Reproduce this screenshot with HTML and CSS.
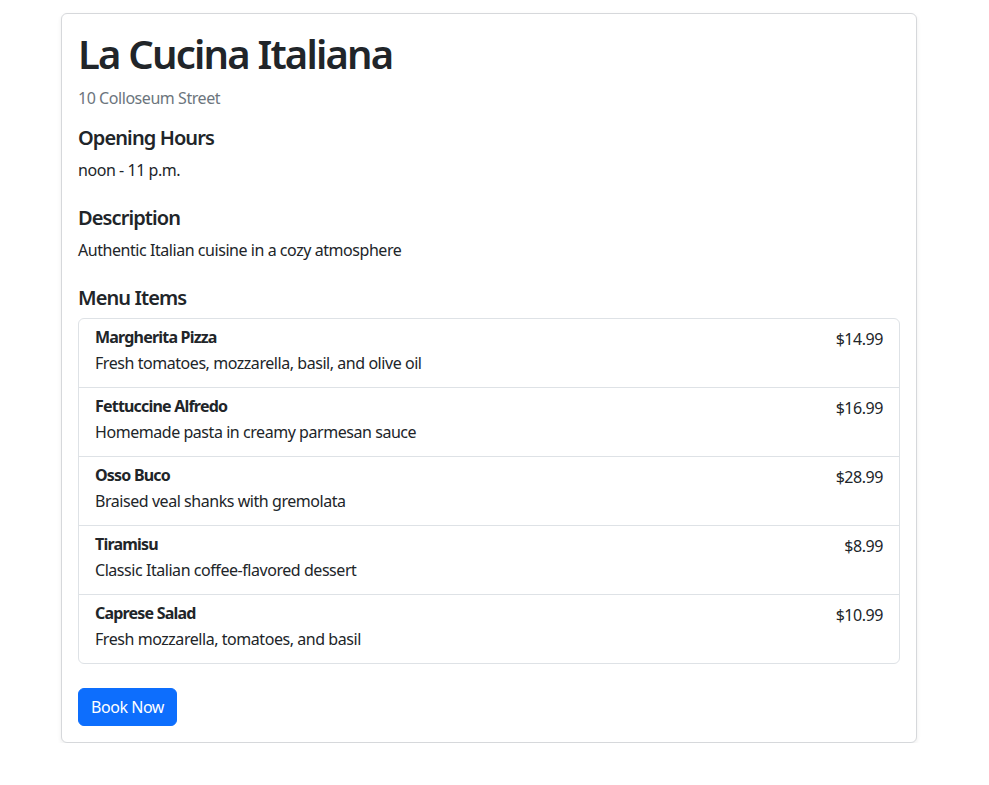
FILE: index.html
```html
<!DOCTYPE html>
<html lang="en">
<head>
<meta charset="utf-8">
<title>La Cucina Italiana</title>
<link rel="stylesheet" href="styles.css">
</head>
<body>
<main class="page">
  <section class="card">
    <h1 class="title">La Cucina Italiana</h1>
    <p class="address">10 Colloseum Street</p>

    <div class="section">
      <h5 class="heading">Opening Hours</h5>
      <p class="text">noon - 11 p.m.</p>
    </div>

    <div class="section">
      <h5 class="heading">Description</h5>
      <p class="text">Authentic Italian cuisine in a cozy atmosphere</p>
    </div>

    <h5 class="heading">Menu Items</h5>
    <ul class="menu">
      <li class="item">
        <div class="item-info">
          <h6 class="item-name">Margherita Pizza</h6>
          <p class="item-desc">Fresh tomatoes, mozzarella, basil, and olive oil</p>
        </div>
        <span class="price">$14.99</span>
      </li>
      <li class="item">
        <div class="item-info">
          <h6 class="item-name">Fettuccine Alfredo</h6>
          <p class="item-desc">Homemade pasta in creamy parmesan sauce</p>
        </div>
        <span class="price">$16.99</span>
      </li>
      <li class="item">
        <div class="item-info">
          <h6 class="item-name">Osso Buco</h6>
          <p class="item-desc">Braised veal shanks with gremolata</p>
        </div>
        <span class="price">$28.99</span>
      </li>
      <li class="item">
        <div class="item-info">
          <h6 class="item-name">Tiramisu</h6>
          <p class="item-desc">Classic Italian coffee-flavored dessert</p>
        </div>
        <span class="price">$8.99</span>
      </li>
      <li class="item">
        <div class="item-info">
          <h6 class="item-name">Caprese Salad</h6>
          <p class="item-desc">Fresh mozzarella, tomatoes, and basil</p>
        </div>
        <span class="price">$10.99</span>
      </li>
    </ul>

    <button class="btn" type="button">Book Now</button>
  </section>
</main>
</body>
</html>
```

FILE: styles.css
```css
* { box-sizing: border-box; }

html, body {
  margin: 0;
  padding: 0;
  background: #fff;
}

body {
  font-family: "Noto Sans", "Open Sans", sans-serif;
  font-size: 16px;
  line-height: 24px;
  letter-spacing: -0.028em;
  color: #212529;
}

.page {
  padding-top: 13px;
  padding-left: 61px;
}

.card {
  width: 856px;
  border: 1px solid #d6d8db;
  border-radius: 6px;
  box-shadow: 0 2px 4px rgba(0, 0, 0, 0.075);
  padding: 16px;
  background: #fff;
}

.title {
  margin: 0 0 8px;
  font-size: 40px;
  line-height: 48px;
  font-weight: 600;
  letter-spacing: -0.045em;
}

.address {
  margin: 0 0 16px;
  color: #6c757d;
}

.section {
  margin-bottom: 24px;
}

.heading {
  margin: 0 0 8px;
  font-size: 20px;
  line-height: 24px;
  font-weight: 600;
  letter-spacing: -0.045em;
}

.text {
  margin: 0;
}

.menu {
  list-style: none;
  margin: 0 0 24px;
  padding: 0;
  border: 1px solid #dee2e6;
  border-radius: 6px;
}

.item {
  display: flex;
  justify-content: space-between;
  align-items: flex-start;
  padding: 8px 16px;
  border-top: 1px solid #dee2e6;
}

.item:first-child {
  border-top: 0;
}

.item-name {
  margin: 0 0 4px;
  font-size: 16px;
  line-height: 20px;
  font-weight: 700;
  letter-spacing: -0.05em;
}

.item-desc {
  margin: 0 0 4px;
}

.price {
  line-height: 24px;
}

.btn {
  display: inline-block;
  font-family: inherit;
  font-size: 16px;
  line-height: 24px;
  letter-spacing: -0.028em;
  padding: 6px 12px;
  color: #fff;
  background: #0d6efd;
  border: 1px solid #0d6efd;
  border-radius: 6px;
  cursor: pointer;
}
```
